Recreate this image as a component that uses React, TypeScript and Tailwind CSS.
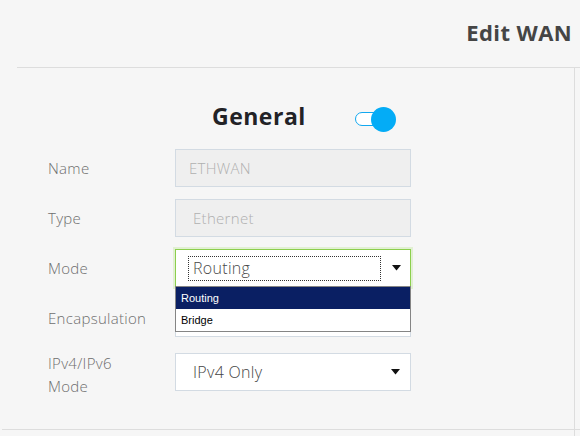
import React from "react";

function Arrow() {
  return (
    <svg width="9" height="6" viewBox="0 0 9 6" className="block">
      <path d="M0 0 H9 L4.5 5.5 Z" fill="#111" />
    </svg>
  );
}

function Toggle() {
  return (
    <div className="relative w-[41px] h-[25px]">
      <div className="absolute left-0 top-[5px] w-[32px] h-[14px] rounded-full border-[1.5px] border-[#12a8f0] bg-white" />
      <div className="absolute right-0 top-0 w-[25px] h-[25px] rounded-full bg-[#04acf6]" />
    </div>
  );
}

function Row({ label, children, tall }: { label: React.ReactNode; children: React.ReactNode; tall?: boolean }) {
  return (
    <div className={`flex items-center ${tall ? "h-[46px]" : "h-[38px]"}`}>
      <div className={`w-[127px] text-[15px] leading-[23px] text-[#6e6e6e] font-light tracking-[0.3px] ${tall ? "pt-[5px]" : ""}`}>{label}</div>
      {children}
    </div>
  );
}

export default function App() {
  return (
    <div
      className="w-[580px] h-[436px] bg-[#f6f6f6] flex flex-col overflow-hidden"
      style={{ fontFamily: '"Open Sans", "Liberation Sans", sans-serif' }}
    >
      <div className="h-[68px] shrink-0 ml-[17px] border-b border-[#dddddd] flex items-center justify-end pr-[8px] pb-[2px]">
        <span className="text-[22px] font-bold text-[#454545] tracking-[0.4px]">Edit WAN</span>
      </div>
      <div className="flex-1 mr-[5px] border-r border-[#dddddd] flex flex-col">
        <div className="h-[361px] shrink-0 flex flex-col pl-[48px] pt-[39px]">
          <div className="flex items-center h-[25px] pl-[164px]">
            <span className="text-[23px] font-bold text-[#222226] w-[143px] leading-none pb-[6px] tracking-[0.5px]">General</span>
            <Toggle />
          </div>
          <div className="flex flex-col gap-[12px] mt-[17px]">
            <Row label="Name">
              <div className="w-[236px] h-[38px] border border-[#d3dbe3] bg-[#efefef] flex items-center pl-[13px] text-[15px] font-light text-[#b0b0b0] tracking-[0.3px]">
                ETHWAN
              </div>
            </Row>
            <Row label="Type">
              <div className="w-[236px] h-[38px] border border-[#d3dbe3] bg-[#efefef] flex items-center pl-[17px] text-[15px] font-light text-[#b0b0b0] tracking-[0.3px]">
                Ethernet
              </div>
            </Row>
            <Row label="Mode">
              <div className="relative w-[236px] h-[38px] border border-[#8ccf4d] bg-white shadow-[0_0_0_2px_#e1f0d2] flex items-center pl-[12px] pr-[9px] z-10">
                <div className="w-[193px] h-[25px] border border-dotted border-[#333] flex items-center pl-[4px] text-[16px] font-light text-[#4a4a4a] tracking-[0.3px]">
                  Routing
                </div>
                <div className="ml-auto">
                  <Arrow />
                </div>
                <div
                  className="absolute left-[-1px] top-[36px] w-[236px] bg-white border border-[#858585] text-[11px]"
                  style={{ fontFamily: '"Liberation Sans", "DejaVu Sans", sans-serif' }}
                >
                  <div className="h-[22px] bg-[#0a1f63] text-white flex items-center pl-[5px]">Routing</div>
                  <div className="h-[22px] text-black flex items-center pl-[5px]">Bridge</div>
                </div>
              </div>
            </Row>
            <Row label="Encapsulation">
              <div className="w-[236px] h-[38px] border border-[#d3dbe3] bg-white" />
            </Row>
            <Row label={<>IPv4/IPv6<br />Mode</>} tall>
              <div className="w-[236px] h-[38px] border border-[#d3dbe3] bg-white flex items-center pl-[17px] pr-[10px] text-[16px] font-light text-[#444] tracking-[0.3px]">
                IPv4 Only
                <div className="ml-auto">
                  <Arrow />
                </div>
              </div>
            </Row>
          </div>
        </div>
        <div className="h-px bg-[#dddddd] ml-[2px] -mr-[6px] shrink-0" />
      </div>
    </div>
  );
}
